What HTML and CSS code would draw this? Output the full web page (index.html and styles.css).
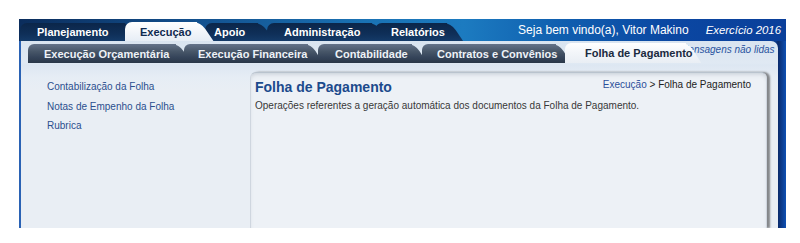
FILE: index.html
```html
<!DOCTYPE html>
<html lang="pt-BR">
<head>
<meta charset="utf-8">
<title>Folha de Pagamento</title>
<link rel="stylesheet" href="styles.css">
</head>
<body>
<div class="frame">
  <header class="topbar">
    <nav class="ttabs">
      <span class="ttab t1">Planejamento</span>
      <span class="ttab t2 active">Execução</span>
      <span class="ttab t3">Apoio</span>
      <span class="ttab t4">Administração</span>
      <span class="ttab t5">Relatórios</span>
    </nav>
    <div class="welcome">Seja bem vindo(a), Vitor Makino</div>
    <div class="year">Exercício 2016</div>
  </header>
  <div class="main">
    <nav class="subbar">
      <span class="stab s1">Execução Orçamentária</span>
      <span class="stab s2">Execução Financeira</span>
      <span class="stab s3">Contabilidade</span>
      <span class="stab s4">Contratos e Convênios</span>
      <span class="stab s5 active">Folha de Pagamento</span>
      <span class="msgs">Mensagens não lidas</span>
    </nav>
    <div class="content">
      <ul class="menu">
        <li><a>Contabilização da Folha</a></li>
        <li><a>Notas de Empenho da Folha</a></li>
        <li><a>Rubrica</a></li>
      </ul>
      <section class="panel">
        <div class="panel-head">
          <h1>Folha de Pagamento</h1>
          <div class="crumb"><a>Execução</a> &gt; Folha de Pagamento</div>
        </div>
        <p class="desc">Operações referentes a geração automática dos documentos da Folha de Pagamento.</p>
      </section>
    </div>
  </div>
</div>
</body>
</html>
```

FILE: styles.css
```css
* { box-sizing: border-box; }
html, body { margin: 0; padding: 0; background: #ffffff; }
body { font-family: "Liberation Sans", Arial, sans-serif; }

.frame {
  margin: 19px 0 0 19px;
  width: 767px;
  height: 209px;
  display: flex;
  flex-direction: column;
  background: linear-gradient(to right, #2a62b4 0, #2a62b4 2px, #0b3a8a calc(100% - 10px), #0a2a6a calc(100% - 8px), #0e50b4 100%);
}

/* ---------- top bar ---------- */
.topbar {
  height: 22px;
  flex: none;
  display: flex;
  align-items: flex-end;
  padding: 0 5px 0 1px;
  background: linear-gradient(to right, #0b2d5c 0%, #134f8c 22%, #1a72b4 45%, #1c7bc0 58%, #1060b0 70%, #0b47a2 85%, #0a3f9a 100%);
}
.ttabs { display: flex; align-items: flex-end; height: 100%; }
.ttab {
  position: relative;
  z-index: 1;
  height: 18px;
  display: flex;
  align-items: center;
  font-weight: bold;
  font-size: 11px;
  color: #ffffff;
  background: linear-gradient(to bottom, #0b264a 0%, #0f2f58 60%, #143a68 100%);
  border-radius: 7px 0 0 0;
  white-space: nowrap;
}
.ttab::after {
  content: "";
  position: absolute;
  z-index: -1;
  top: 0; bottom: 0;
  right: -10px;
  width: 20px;
  background: inherit;
  transform: skewX(34deg);
  border-top-right-radius: 7px;
}
.ttab.active {
  z-index: 2;
  height: 19px;
  color: #0f2a50;
  background: linear-gradient(to bottom, #ffffff 0%, #f3f6fa 50%, #e6edf5 100%);
}
.t1 { width: 105px; padding-left: 17px; }
.t2 { width: 72px; padding-left: 15px; }
.t3 { width: 53px; padding-left: 9px; margin-left: 8px; }
.t4 { width: 105px; padding-left: 17px; margin-left: 9px; }
.t5 { width: 72px; padding-left: 16px; margin-left: 3px; }

.welcome {
  align-self: center;
  margin-left: auto;
  font-size: 12px;
  color: #ffffff;
  white-space: nowrap;
}
.year {
  align-self: center;
  margin-left: 17px;
  font-size: 11.4px;
  font-style: italic;
  color: #ffffff;
  white-space: nowrap;
}

/* ---------- main area ---------- */
.main {
  flex: 1;
  margin: 0 8px 0 2px;
  display: flex;
  flex-direction: column;
  border-top-right-radius: 7px;
  background: linear-gradient(to bottom, #d9e4f0 0, #e0e9f3 22px, #dde7f2 24px, #e6edf5 36px, #e9eef4 50px, #e9eef4 100%);
  min-height: 0;
}
.subbar {
  height: 22px;
  flex: none;
  display: flex;
  align-items: flex-end;
  padding-left: 7px;
}
.stab {
  position: relative;
  z-index: 1;
  height: 19px;
  display: flex;
  align-items: center;
  font-weight: bold;
  font-size: 11px;
  color: #eef2f7;
  background: linear-gradient(to bottom, #64738a 0%, #475668 40%, #35445a 70%, #2a3849 100%);
  border-radius: 6px 0 0 0;
  white-space: nowrap;
}
.stab::after {
  content: "";
  position: absolute;
  z-index: -1;
  top: 0; bottom: 0;
  right: -9px;
  width: 18px;
  background: inherit;
  transform: skewX(32deg);
  border-top-right-radius: 7px;
}
.stab.active {
  z-index: 3;
  height: 20px;
  color: #1a2a40;
  background: linear-gradient(to bottom, #ffffff 0%, #f3f6fa 45%, #e9eef4 100%);
}
.s1 { width: 148px; padding-left: 16px; }
.s2 { width: 124px; padding-left: 14px; margin-left: 8px; }
.s3 { width: 94px; padding-left: 17px; margin-left: 10px; }
.s4 { width: 134px; padding-left: 15px; margin-left: 10px; }
.s5 { width: 121px; padding-left: 20px; margin-left: 9px; }
.msgs {
  position: relative;
  z-index: 2;
  align-self: flex-start;
  margin: 3px 0 0 -6px;
  font-size: 10px;
  font-style: italic;
  color: #2a54a0;
  white-space: nowrap;
}

.content {
  flex: 1;
  display: flex;
  min-height: 0;
}
.menu {
  width: 229px;
  flex: none;
  list-style: none;
  margin: 0;
  padding: 14px 0 0 26px;
  font-size: 10px;
  line-height: 19.5px;
}
.menu a { color: #2b4f8e; }

.panel {
  flex: 1;
  margin: 9px 11px 0 0;
  background: #edf1f6;
  border: 1px solid #cfd6df;
  border-top-color: #b9c3ce;
  border-bottom: 0;
  border-radius: 6px 6px 0 0;
  box-shadow: inset 0 3px 4px -2px rgba(70, 90, 110, 0.25), 3px 0 2px rgba(50, 50, 50, 0.55);
  padding: 5px 15px 0 4px;
}
.panel-head {
  display: flex;
  justify-content: space-between;
  align-items: flex-start;
}
.panel h1 {
  margin: 0;
  font-size: 14px;
  line-height: 18px;
  font-weight: bold;
  color: #1c4a8c;
}
.crumb {
  font-size: 10px;
  line-height: 14px;
  color: #222222;
}
.crumb a { color: #2b4f9a; }
.desc {
  margin: 3px 0 0 0;
  font-size: 10px;
  line-height: 13px;
  color: #383838;
}
```
